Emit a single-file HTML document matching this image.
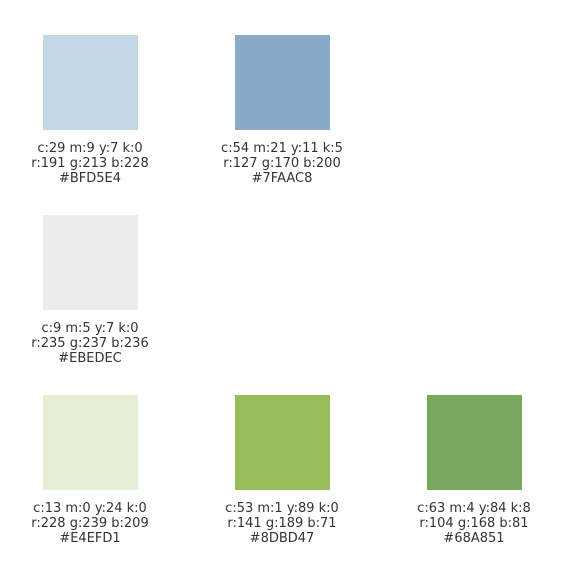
<!DOCTYPE html>
<html><head><style>
body{margin:0;width:567px;height:567px;background:#fff;position:relative;font-family:"DejaVu Sans","Liberation Sans",sans-serif;font-size:13px;color:#333}
.s{position:absolute;width:95px;height:95px}
.t{position:absolute;width:180px;text-align:center;line-height:15px}
</style></head><body>
<div class="s" style="left:43px;top:35px;background:#C4D7E5"></div>
<div class="t" style="left:0px;top:141px">c:29 m:9 y:7 k:0<br>r:191 g:213 b:228<br>#BFD5E4</div>
<div class="s" style="left:235px;top:35px;background:#87AAC8"></div>
<div class="t" style="left:192px;top:141px">c:54 m:21 y:11 k:5<br>r:127 g:170 b:200<br>#7FAAC8</div>
<div class="s" style="left:43px;top:215px;background:#EBEDEC"></div>
<div class="t" style="left:0px;top:321px">c:9 m:5 y:7 k:0<br>r:235 g:237 b:236<br>#EBEDEC</div>
<div class="s" style="left:43px;top:395px;background:#E5EFD6"></div>
<div class="t" style="left:0px;top:501px">c:13 m:0 y:24 k:0<br>r:228 g:239 b:209<br>#E4EFD1</div>
<div class="s" style="left:235px;top:395px;background:#99BD59"></div>
<div class="t" style="left:192px;top:501px">c:53 m:1 y:89 k:0<br>r:141 g:189 b:71<br>#8DBD47</div>
<div class="s" style="left:427px;top:395px;background:#77A85E"></div>
<div class="t" style="left:384px;top:501px">c:63 m:4 y:84 k:8<br>r:104 g:168 b:81<br>#68A851</div>
</body></html>
